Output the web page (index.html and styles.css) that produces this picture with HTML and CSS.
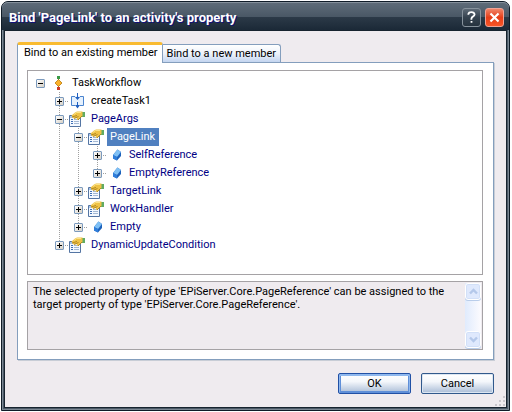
FILE: index.html
```
<!DOCTYPE html>
<html lang="en">
<head>
    <meta charset="UTF-8">
    <meta name="viewport" content="width=device-width, initial-scale=1.0">
    <title>Bind 'PageLink' to an activity's property</title>
    <link rel="stylesheet" href="styles.css">
</head>
<body>
    <!-- Shared icons -->
    <svg class="sprites" aria-hidden="true">
        <symbol id="icon-workflow" viewBox="0 0 16 16">
            <path d="M8 3h1v10H8z" fill="#555"/>
            <path d="M7 1h3v3H7z" fill="#3a9a48"/>
            <path d="M8.500 4.500L12 8l-3.500 3.500L5 8z" fill="#fbb22a" stroke="#b87a0c" stroke-width=".8"/>
            <path d="M7 12h3v3H7z" fill="#cf3a24"/>
        </symbol>
        <symbol id="icon-activity" viewBox="0 0 16 16">
            <path d="M3 3h11v10H3z" fill="#e6f1fd"/>
            <path d="M6 3.500H2.500v9H6M11 3.500h3.500v9H11" fill="none" stroke="#4a84cf"/>
            <path d="M8 0h1v4H8zM8 9h1v4H8z" fill="#1f5fc0"/>
            <path d="M6 4h5L8.500 7zM6 12h5l-2.500 3.500z" fill="#1f5fc0"/>
        </symbol>
        <symbol id="icon-property" viewBox="0 0 16 16">
            <path d="M.5 4.500h11v11H.5z" fill="#f4f9ff" stroke="#5475a3"/>
            <path d="M1 5h10v2H1z" fill="#a9c5ea"/>
            <path d="M2 8h2v1H2zM2 10h2v1H2zM2 12h2v1H2z" fill="#3f6fb5"/>
            <path d="M5 8h5v1H5zM5 10h5v1H5zM5 12h5v1H5z" fill="#a3b8d4"/>
            <path d="M13 1h3v5h-3z" fill="#62ab62"/>
            <path d="M2.500 4.500L6 1.500 8 .500h5.500V5L11 7.500 9 9 7.500 8.500 8 7 5 7.500 3.500 6.500z" fill="#eec247"/>
            <path d="M5 3.500L7.500 1.500H12" fill="none" stroke="#fbe389"/>
            <path d="M3 6l5-1.500M5 7.500L9.500 5.500M9 9l4-4" fill="none" stroke="#a27a16" stroke-width=".8"/>
        </symbol>
        <symbol id="icon-field" viewBox="0 0 16 16">
            <path d="M6 8l4.500-5.500L14 5v4l-4 4.500L6 11.500z" fill="#1d62bb"/>
            <path d="M6 8l4.500-5.500L14 5l-4 5z" fill="#7fc0f5"/>
            <path d="M6 8l4 2v3.500L6 11.500z" fill="#2f7edb"/>
        </symbol>
    </svg>

    <div class="window" role="dialog" aria-labelledby="window-title">
        <header class="titlebar">
            <h1 class="title" id="window-title">Bind 'PageLink' to an activity's property</h1>
            <button class="caption-button" type="button" aria-label="Help">
                <svg width="19" height="19" viewBox="0 0 19 19" aria-hidden="true">
                    <path d="M6 6.500V5.500Q6.500 3.500 9.500 3.500t3.500 2.500q0 1.500-2 2.500t-1.500 3.500M9.500 13.500v2" fill="none" stroke="#fff" stroke-width="2"/>
                </svg>
            </button>
            <button class="caption-button close" type="button" aria-label="Close">
                <svg width="19" height="19" viewBox="0 0 19 19" aria-hidden="true">
                    <path d="M5 5l9 9M14 5l-9 9" stroke="#fff" stroke-width="2.400"/>
                </svg>
            </button>
        </header>

        <main class="client">
            <div class="tabs" role="tablist">
                <button class="tab active" type="button" role="tab" aria-selected="true">Bind to an existing member</button>
                <button class="tab" type="button" role="tab" aria-selected="false">Bind to a new member</button>
            </div>

            <div class="tab-page" role="tabpanel">
                <ul class="tree">
                    <li>
                        <div class="node root">
                            <button class="expander" type="button" aria-label="Collapse"></button>
                            <svg class="icon"><use href="#icon-workflow"/></svg>
                            <span class="label plain">TaskWorkflow</span>
                        </div>
                        <ul class="branch">
                            <li>
                                <div class="node">
                                    <button class="expander plus" type="button" aria-label="Expand"></button>
                                    <svg class="icon"><use href="#icon-activity"/></svg>
                                    <span class="label plain">createTask1</span>
                                </div>
                            </li>
                            <li>
                                <div class="node">
                                    <button class="expander" type="button" aria-label="Collapse"></button>
                                    <svg class="icon"><use href="#icon-property"/></svg>
                                    <span class="label">PageArgs</span>
                                </div>
                                <ul class="branch">
                                    <li>
                                        <div class="node">
                                            <button class="expander" type="button" aria-label="Collapse"></button>
                                            <svg class="icon"><use href="#icon-property"/></svg>
                                            <span class="label selected">PageLink</span>
                                        </div>
                                        <ul class="branch">
                                            <li>
                                                <div class="node">
                                                    <button class="expander plus" type="button" aria-label="Expand"></button>
                                                    <svg class="icon"><use href="#icon-field"/></svg>
                                                    <span class="label">SelfReference</span>
                                                </div>
                                            </li>
                                            <li>
                                                <div class="node">
                                                    <button class="expander plus" type="button" aria-label="Expand"></button>
                                                    <svg class="icon"><use href="#icon-field"/></svg>
                                                    <span class="label">EmptyReference</span>
                                                </div>
                                            </li>
                                        </ul>
                                    </li>
                                    <li>
                                        <div class="node">
                                            <button class="expander plus" type="button" aria-label="Expand"></button>
                                            <svg class="icon"><use href="#icon-property"/></svg>
                                            <span class="label">TargetLink</span>
                                        </div>
                                    </li>
                                    <li>
                                        <div class="node">
                                            <button class="expander plus" type="button" aria-label="Expand"></button>
                                            <svg class="icon"><use href="#icon-property"/></svg>
                                            <span class="label">WorkHandler</span>
                                        </div>
                                    </li>
                                    <li>
                                        <div class="node">
                                            <button class="expander plus" type="button" aria-label="Expand"></button>
                                            <svg class="icon"><use href="#icon-field"/></svg>
                                            <span class="label">Empty</span>
                                        </div>
                                    </li>
                                </ul>
                            </li>
                            <li>
                                <div class="node">
                                    <button class="expander plus" type="button" aria-label="Expand"></button>
                                    <svg class="icon"><use href="#icon-property"/></svg>
                                    <span class="label">DynamicUpdateCondition</span>
                                </div>
                            </li>
                        </ul>
                    </li>
                </ul>

                <div class="description">
                    <textarea class="description-text" aria-label="Description" readonly>The selected property of type 'EPiServer.Core.PageReference' can be assigned to the target property of type 'EPiServer.Core.PageReference'.</textarea>
                    <div class="scrollbar">
                        <button class="scroll-button" type="button" aria-label="Scroll up" disabled>
                            <svg width="9" height="7" viewBox="0 0 9 7" aria-hidden="true"><path d="M1 5.500L4.500 2 8 5.500" fill="none" stroke="#b4c8ea" stroke-width="2.400"/></svg>
                        </button>
                        <button class="scroll-button" type="button" aria-label="Scroll down" disabled>
                            <svg width="9" height="7" viewBox="0 0 9 7" aria-hidden="true"><path d="M1 1.500L4.500 5 8 1.500" fill="none" stroke="#b4c8ea" stroke-width="2.400"/></svg>
                        </button>
                    </div>
                </div>
            </div>

            <div class="actions">
                <button class="button default" type="button">OK</button>
                <button class="button" type="button">Cancel</button>
            </div>

            <svg class="grip" width="11" height="11" viewBox="0 0 11 11" aria-hidden="true">
                <path d="M8 0h2v2H8zM4 4h2v2H4zM8 4h2v2H8zM0 8h2v2H0zM4 8h2v2H4zM8 8h2v2H8z" fill="#c9c6cc"/>
            </svg>
        </main>
    </div>
</body>
</html>
```
FILE: styles.css
```
* {
    box-sizing: border-box;
}
body {
    margin: 0;
    padding: 1px 2px 1px 1px;
    background: #fff;
    color: #000;
    font-family: Roboto, Tahoma, sans-serif;
    font-size: 11px;
    line-height: 13px;
}
button,
textarea {
    font: inherit;
    color: inherit;
    margin: 0;
    padding: 0;
}
ul {
    list-style: none;
    margin: 0;
    padding: 0;
}
.sprites {
    display: none;
}

/* Window frame */
.window {
    background: #4b5967;
    border: 1px solid #101c28;
    border-radius: 7px 7px 0 0;
    padding: 0 2px 2px;
    box-shadow: inset 1px 1px 0 #7b8793, inset -1px -1px 0 #7b8793;
}
.titlebar {
    display: flex;
    align-items: center;
    gap: 4px;
    height: 28px;
    margin: 0 -2px;
    padding: 2px 5px 0 7px;
    border-radius: 6px 6px 0 0;
    border-top: 1px solid #85909b;
    background: linear-gradient(#5e6b78, #4a5866 50%, #2c3a48 51%, #1b2937);
}
.title {
    flex: 1;
    margin: 0;
    font-size: 13px;
    line-height: 18px;
    color: #fff;
    text-shadow: 1px 1px 0 #10107c;
}
.caption-button {
    display: flex;
    width: 19px;
    height: 19px;
    border: 1px solid #87929c;
    border-radius: 3px;
    background: linear-gradient(#5d6975, #35424f 50%, #26333f);
    align-items: center;
    justify-content: center;
}
.caption-button.close {
    border-color: #f0a396;
    background: linear-gradient(#f08468, #e63e18 50%, #fa5527);
}

/* Client area */
.client {
    border: 1px solid #17232f;
    background: #efebef;
    padding: 11px 0 0;
}
.tabs {
    display: flex;
    align-items: flex-end;
    margin: 0 12px;
}
.tab {
    height: 18px;
    padding: 0 4px;
    border: 1px solid #849ebd;
    border-left: 0;
    border-bottom: 0;
    border-radius: 0 3px 0 0;
    background: linear-gradient(#fff, #eef3fb 50%, #c3d5f0);
}
.tab.active {
    height: 21px;
    margin-bottom: -1px;
    padding: 0 4px 3px 6px;
    border-left: 1px solid #849ebd;
    border-top: 3px solid #f9bb31;
    border-radius: 3px 3px 0 0;
    background: #fff;
}
.tab-page {
    display: grid;
    gap: 6px;
    margin: 0 12px;
    padding: 7px 10px 9px 9px;
    border: 1px solid #849ebd;
    background: #fff;
    box-shadow: 1px 1px 0 #c8cdd6;
}

/* Member tree */
.tree {
    min-height: 205px;
    padding: 3px 8px;
    border: 1px solid #a5a2a5;
}
.branch {
    margin-left: 19px;
    background: repeating-linear-gradient(#a0a0a0 0 1px, transparent 1px 2px) 4px 0 / 1px calc(100% - 9px) no-repeat;
}
.node {
    display: flex;
    align-items: center;
    height: 18px;
}
.expander {
    width: 9px;
    height: 9px;
    border: 1px solid #7b9abd;
    border-radius: 1px;
    background:
        linear-gradient(#000, #000) center / 5px 1px no-repeat,
        linear-gradient(135deg, #fff, #d6d0c5);
}
.expander.plus {
    background:
        linear-gradient(#000, #000) center / 5px 1px no-repeat,
        linear-gradient(#000, #000) center / 1px 5px no-repeat,
        linear-gradient(135deg, #fff, #d6d0c5);
}
.node::before {
    content: "";
    order: 1;
    width: 5px;
    height: 1px;
    background: repeating-linear-gradient(90deg, transparent 0 1px, #a0a0a0 1px 2px);
}
.node.root::before {
    background: none;
}
.icon {
    order: 2;
    width: 16px;
    height: 16px;
}
.label {
    order: 3;
    margin-left: 3px;
    padding: 2px 4px 3px 3px;
    color: #000084;
}
.label.plain {
    color: #000;
}
.label.selected {
    background: #5080c0;
    color: #fff;
}

/* Description box */
.description {
    display: flex;
    height: 69px;
    padding: 1px;
    border: 1px solid #a5a2a5;
    background: #efebef;
}
.description-text {
    flex: 1;
    padding: 2px 4px;
    border: 0;
    outline: 0;
    resize: none;
    overflow: hidden;
    background: transparent;
}
.scrollbar {
    display: flex;
    flex-direction: column;
    justify-content: space-between;
    width: 16px;
    background: linear-gradient(90deg, #e0ebfd, #fcfbfe);
}
.scroll-button {
    display: flex;
    align-items: center;
    justify-content: center;
    height: 17px;
    border: 1px solid #fff;
    border-radius: 3px;
    background: #dfe9fd;
    box-shadow: inset 0 0 0 1px #d2e0f8, 0 1px 0 #b9cdea;
}

/* Dialog buttons */
.actions {
    display: flex;
    justify-content: flex-end;
    gap: 10px;
    margin: 13px 12px 0;
}
.button {
    width: 73px;
    height: 21px;
    border: 1px solid #31598c;
    border-radius: 2px;
    background: linear-gradient(#fff, #f4f7fb 40%, #a9bcd6);
    box-shadow: inset 0 0 0 1px #dce6f2;
}
.button.default {
    border-color: #2150a5;
    box-shadow: inset 0 1px 0 1px #8fb8ee, inset 0 0 0 2px #5f8fd8;
}
.grip {
    display: block;
    margin: 2px 0 0 auto;
}
```
